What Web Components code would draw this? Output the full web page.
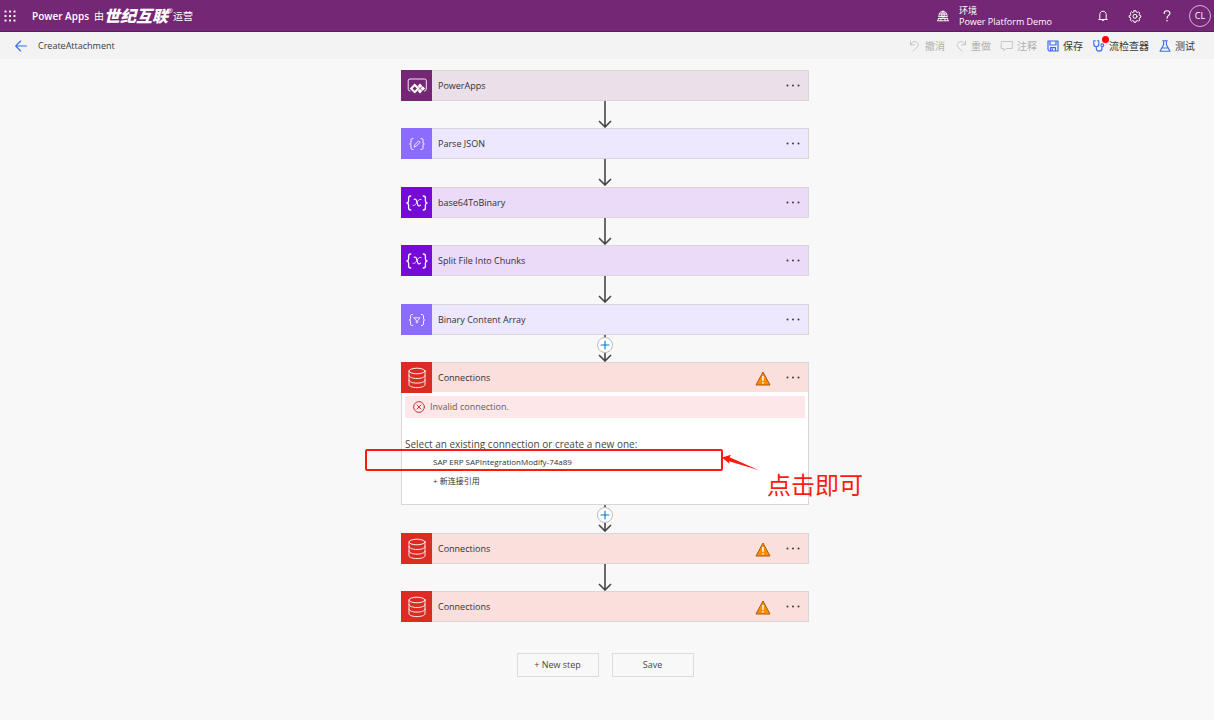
<!DOCTYPE html>
<html lang="zh-CN">
<head>
<meta charset="utf-8">
<meta name="viewport" content="width=device-width, initial-scale=1">
<title>CreateAttachment - Power Apps</title>
<style>
  body {
    margin: 0;
    min-height: 100vh;
    background: #f8f8f8;
    color: #3b3a39;
    font: 9px/12px "Open Sans", "Noto Sans CJK SC", sans-serif;
  }
</style>
</head>
<body>
<flow-page></flow-page>

<script>
const define = (name, markup, setup) => {
  const template = document.createElement('template');
  template.innerHTML = `<style>
    * { box-sizing: border-box; }
    button { font: inherit; color: inherit; background: none; border: 0; padding: 0; margin: 0; cursor: pointer; }
    svg { display: block; flex: none; }
  </style>` + markup;
  customElements.define(name, class extends HTMLElement {
    connectedCallback() {
      if (this.shadowRoot) return;
      this.attachShadow({ mode: 'open' }).append(template.content.cloneNode(true));
      if (setup) setup(this, this.shadowRoot);
    }
  });
};

const line = 'fill="none" stroke="currentColor" stroke-linecap="round" stroke-linejoin="round"';
const icons = {
  waffle: ['0 0 12 12', [1.5, 6, 10.5].map(y => [1.5, 6, 10.5].map(x =>
    `<rect x="${x - 1}" y="${y - 1}" width="2" height="2" rx=".6" fill="currentColor"/>`).join('')).join('')],
  environment: ['0 0 12 12', `<g ${line} stroke-width=".9"><path d="M2 7V5.400C2 3 3.800 1.200 6 1.200s4 1.800 4 4.200V7M2.300 4h7.400M2 6.500h8M6 1.200V8M4.300 7V4.500c0-1.400.7-2.600 1.700-3.300 1 .7 1.700 1.900 1.700 3.300V7M1.500 8.500h9M.8 10.800h10.400M1.500 8.500l-.7 2.300M10.500 8.500l.7 2.300M4 8.500v2.200M8 8.500v2.200"/></g>`],
  bell: ['0 0 12 12', `<path ${line} d="M1.800 9.500h8.400M2.800 9.500V4.600C2.800 2.700 4.200 1.200 6 1.200s3.200 1.500 3.200 3.400v4.900M5 9.800c0 1.500 2 1.500 2 0"/>`],
  gear: ['0 0 12 12', `<g ${line}><path d="M5.100.7h1.800l.3 1.300 1.200.5 1.100-.7 1.300 1.300-.7 1.100.5 1.200 1.200.3v1.600l-1.200.3-.5 1.200.7 1.100-1.300 1.300-1.100-.7-1.200.5-.3 1.300H5.100L4.800 11 3.600 10.500l-1.100.7-1.300-1.300.7-1.100-.5-1.200-1.200-.3V5.700l1.200-.3.5-1.200-.7-1.100 1.300-1.300 1.100.7L4.800 2z"/><circle cx="6" cy="6.300" r="2"/></g>`],
  help: ['0 0 12 12', `<path ${line} stroke-width="1.100" d="M3.200 3.500C3.200 1.700 4.300.8 6 .8s2.900 1 2.900 2.500C8.900 5.400 6 5.500 6 8.300"/><circle cx="6" cy="10.800" r=".8" fill="currentColor"/>`],
  back: ['0 0 12 12', `<path ${line} stroke-width="1.100" d="M11.500 6H.7M5.700 1L.7 6l5 5"/>`],
  undo: ['0 0 12 12', `<path ${line} d="M1.500 1v3.800h4M1.800 4.500C3 2.300 4.600 1.300 6.400 1.600c3 .5 3.700 3.400 1.600 5.600L4 11.200"/>`],
  redo: ['0 0 12 12', `<path ${line} d="M10.500 1v3.800h-4M10.200 4.500C9 2.300 7.400 1.300 5.600 1.600c-3 .5-4.400 3-2.500 5.600L7 11.200"/>`],
  comment: ['0 0 12 12', `<path ${line} d="M.6 1.500h10.800v7H5L2.800 10.800V8.500H.6z"/>`],
  save: ['0 0 12 12', `<path ${line} stroke-width="1.200" d="M1 1h10v10H2.300L1 9.700zM3 1v4h6V1M3.500 11V7.700h5V11M5.300 9v2"/>`],
  checker: ['0 0 12 12', `<g ${line} stroke-width="1.100"><path d="M2.300.8H.8V4c0 1.700 1 2.700 2.500 2.700S5.800 5.700 5.800 4V.8H4.400M3.300 6.700v1.500c0 1.800 1 2.900 2.800 2.900s2.900-1.100 2.900-2.700V6.700"/><circle cx="9.300" cy="5.300" r="1.400"/></g>`],
  test: ['0 0 12 12', `<path ${line} stroke-width="1.100" d="M3.700.7h4.600M4.600.7v4L1 11.200h10L7.400 4.700v-4M2.800 8h6.400"/>`],
  more: ['0 0 14 4', `<g fill="currentColor"><circle cx="1.500" cy="1.500" r="1"/><circle cx="7" cy="1.500" r="1"/><circle cx="12.500" cy="1.500" r="1"/></g>`],
  plus: ['0 0 12 12', `<path ${line} stroke-width="1.100" d="M6 2v8M2 6h8"/>`],
  error: ['0 0 12 12', `<g ${line} stroke-width=".9"><circle cx="6" cy="6" r="5.400"/><path d="M4 4l4 4M8 4L4 8"/></g>`],
  warning: ['0 0 16 16', `<path d="M8 2L15 15H1z" fill="#ff8c00" stroke="#a85a08" stroke-linejoin="round"/><path d="M7.100 6h1.800l-.3 5H7.400z" fill="#fff"/><circle cx="8" cy="12.800" r=".9" fill="#fff"/>`],
  powerapps: ['0 0 30 30', `<path ${line} stroke-width=".9" d="M8 20q-1.800 0-1.800-1.800V9.800Q6.200 8 8 8h14.500q1.800 0 1.800 1.800v8.400q0 1.800-1.800 1.800"/><path fill="#fff" fill-rule="evenodd" d="M12.700 12.500l5 5-5 5-5-5zM12.700 15.400l-2.200 2.100 2.200 2.200 2.200-2.200zM18 12.600l2.400 2.300-2.400 2.300-2.300-2.300zM18 17.800l2.400 2.300-2.400 2.300-2.300-2.300zM20.800 15.200l2.400 2.300-2.400 2.300-2.300-2.300z"/>`],
  parse: ['0 0 30 30', `<g ${line}><path d="M11 9.500c-1.800 0-2 .6-2 1.800v2.100c0 1-.3 1.600-1.400 1.600 1.100 0 1.400.6 1.400 1.600v2.100c0 1.200.2 1.800 2 1.800M19 9.500c1.800 0 2 .6 2 1.800v2.100c0 1 .3 1.600 1.400 1.600-1.100 0-1.400.6-1.400 1.600v2.100c0 1.200-.2 1.800-2 1.800"/><path stroke-width=".8" d="M12.300 17.700l.5-2 3.900-3.800 1.400 1.400-3.900 3.800z"/></g>`],
  variable: ['0 0 30 30', `<g ${line} stroke-width="1.300"><path d="M8.700 8c-1.800 0-2.100.8-2.100 2v2.800c0 1.300-.4 2-1.700 2.200 1.300.2 1.700.9 1.700 2.200V20c0 1.200.3 2 2.100 2M21.300 8c1.800 0 2.100.8 2.100 2v2.800c0 1.300.4 2 1.700 2.200-1.300.2-1.700.9-1.700 2.200V20c0 1.200-.3 2-2.100 2"/><path stroke-width="1.200" d="M12.200 11.300c1.400-.5 2 .2 2.400 1.600l1 3.500c.4 1.600 1.400 2.200 2.800.8"/><path stroke-width=".8" d="M19 11.400c-2-.7-3 1.400-4.200 3.200-1.100 1.700-2 3.700-3.800 2.700"/></g>`],
  filter: ['0 0 30 30', `<g ${line}><path d="M10.500 9.500c-1.800 0-2 .6-2 1.800v2.100c0 1-.3 1.600-1.400 1.600 1.100 0 1.400.6 1.400 1.600v2.100c0 1.200.2 1.800 2 1.800M19.500 9.500c1.800 0 2 .6 2 1.800v2.100c0 1 .3 1.600 1.400 1.600-1.100 0-1.400.6-1.400 1.600v2.100c0 1.200-.2 1.800-2 1.800"/><path stroke-width=".8" d="M12 12.800h6l-2.300 2.700v2.200h-1.400v-2.200z"/></g>`],
  database: ['0 0 30 30', `<g ${line} stroke-width=".9"><ellipse cx="15" cy="8" rx="8" ry="2.800"/><path d="M7 8v13.700c0 1.600 3.500 2.900 8 2.900s8-1.300 8-2.900V8M7 12.600c0 1.600 3.500 2.900 8 2.900s8-1.300 8-2.900M7 17.200c0 1.600 3.500 2.900 8 2.900s8-1.300 8-2.900"/></g>`]
};

define('ui-icon', `<style>
  :host { display: block; flex: none; width: 12px; height: 12px; }
  svg { width: 100%; height: 100%; overflow: visible; }
</style><svg aria-hidden="true"></svg>`, (host, root) => {
  const [box, shape] = icons[host.getAttribute('name')];
  const svg = root.querySelector('svg');
  svg.setAttribute('viewBox', box);
  svg.innerHTML = shape;
});

define('app-header', `<style>
  :host { display: block; background: #742774; border-bottom: 1px solid #5f1c5f; color: #fff; }
  header { display: flex; align-items: center; height: 31px; padding: 0 3px 0 4px; }
  button { display: grid; place-items: center; width: 32px; height: 31px; }
  .waffle { width: 12px; margin-right: 16px; }
  .brand { display: flex; align-items: center; flex: 1; color: inherit; text-decoration: none; white-space: nowrap; line-height: 16px; }
  strong { font-size: 10px; font-weight: 600; margin-right: 5px; }
  em { font-size: 16px; font-weight: 900; }
  sup { font-size: 6px; line-height: 6px; align-self: flex-start; }
  .cn { font-size: 10px; }
  .environment { display: flex; align-items: center; gap: 10px; width: 150px; line-height: 11px; white-space: nowrap; }
  .avatar { width: 22px; height: 22px; margin-left: 6px; border: 1px solid #d3b5d3; border-radius: 50%; }
</style>
<header>
  <button class="waffle" aria-label="应用启动器"><ui-icon name="waffle"></ui-icon></button>
  <a class="brand" href="#"><strong>Power Apps</strong><span class="cn">由</span><em>世纪互联</em><sup>®</sup><span class="cn">运营</span></a>
  <div class="environment"><ui-icon name="environment"></ui-icon><div><div>环境</div><div>Power Platform Demo</div></div></div>
  <button aria-label="通知"><ui-icon name="bell"></ui-icon></button>
  <button aria-label="设置"><ui-icon name="gear"></ui-icon></button>
  <button aria-label="帮助"><ui-icon name="help"></ui-icon></button>
  <button class="avatar" aria-label="帐户">CL</button>
</header>`);

define('command-button', `<style>
  :host { display: block; }
  button { position: relative; display: flex; align-items: center; gap: 4px; height: 26px; font-size: 10px; white-space: nowrap; }
  ui-icon { color: #3b6cf0; }
  button:disabled { color: #b3b1af; cursor: default; }
  button:disabled ui-icon { color: #c8c6c4; }
  .badge { position: absolute; left: 9px; top: 3px; width: 7px; height: 7px; border-radius: 50%; background: #f00; }
</style><button><slot></slot></button>`, (host, root) => {
  const button = root.querySelector('button');
  button.disabled = host.hasAttribute('disabled');
  const icon = document.createElement('ui-icon');
  icon.setAttribute('name', host.getAttribute('icon'));
  button.prepend(icon);
  if (host.hasAttribute('alert')) {
    const badge = document.createElement('span');
    badge.className = 'badge';
    button.append(badge);
  }
});

define('command-bar', `<style>
  :host { display: flex; align-items: center; gap: 10px; height: 27px; padding: 0 19px 0 15px; background: #f3f3f3; }
  a { display: block; color: #3b6cf0; }
  h1 { flex: 1; margin: 0 0 0 1px; font-size: 9px; font-weight: 400; white-space: nowrap; }
</style>
<a href="#" aria-label="返回"><ui-icon name="back"></ui-icon></a>
<h1><slot name="title"></slot></h1>
<slot></slot>`);

define('flow-card', `<style>
  :host { display: block; position: relative; border: 1px solid #d8d6d8; background: #fff; }
  .head { display: flex; align-items: center; height: 29px; background: var(--tint); }
  .tile { width: 31px; height: 31px; margin: -1px 0 -1px -1px; background: var(--accent); display: grid; place-items: center; color: #fff; }
  .tile ui-icon { width: 30px; height: 30px; }
  h2 { flex: 1; margin: 0 0 0 6px; font-size: 9px; font-weight: 400; color: #323130; }
  .warn { width: 16px; height: 16px; margin-right: 8px; }
  button { display: grid; place-items: center; width: 28px; height: 29px; margin-right: 1px; }
  button ui-icon { width: 14px; height: 4px; }
</style>
<div class="head">
  <div class="tile"></div>
  <h2></h2>
  <button aria-label="更多"><ui-icon name="more"></ui-icon></button>
</div>
<slot></slot>`, (host, root) => {
  const icon = document.createElement('ui-icon');
  icon.setAttribute('name', host.getAttribute('icon'));
  root.querySelector('.tile').append(icon);
  root.querySelector('h2').textContent = host.getAttribute('label');
  if (host.hasAttribute('warning')) {
    const warn = document.createElement('ui-icon');
    warn.setAttribute('name', 'warning');
    warn.className = 'warn';
    root.querySelector('h2').after(warn);
  }
});

define('flow-arrow', `<style>
  :host { display: grid; justify-content: center; height: 27px; color: #484644; }
  svg, button { grid-area: 1 / 1; }
  svg { width: 16px; height: 27px; }
  button { display: none; justify-self: center; width: 16px; height: 16px; margin-top: 2px; place-items: center; border: 1px solid #bebbb8; border-radius: 50%; background: #fff; color: #0078d4; }
  :host([insert]) button { display: grid; }
</style>
<svg viewBox="0 0 16 27" aria-hidden="true"><path d="M8 0v26M2 20l6 6 6-6" fill="none" stroke="currentColor" stroke-width="1.600"/></svg>
<button aria-label="插入新步骤"><ui-icon name="plus"></ui-icon></button>`);

define('connection-picker', `<style>
  :host { display: block; padding: 4px 3px 16px; }
  .error { display: flex; align-items: center; gap: 5px; height: 22px; padding: 0 8px; background: #fde7e9; color: #605e5c; }
  .error ui-icon { color: #c4262e; }
  p { margin: 19px 0 4px; font-size: 10px; line-height: 14px; color: #484644; }
  ul { list-style: none; margin: 0; padding: 0 0 0 28px; display: grid; gap: 5px; font-size: 8px; }
  li { height: 14px; }
  ul button { display: block; width: 100%; line-height: 14px; text-align: left; color: #323130; }
</style>
<div class="error" role="alert"><ui-icon name="error"></ui-icon>Invalid connection.</div>
<p>Select an existing connection or create a new one:</p>
<ul>
  <li><button>SAP ERP SAPIntegrationModify-74a89</button></li>
  <li><button>+ 新连接引用</button></li>
</ul>`);

/* Red call-out laid over the card: frame, pointer and caption. */
define('call-out', `<style>
  :host { position: absolute; left: -37px; top: 86px; width: 500px; height: 52px; color: #ff1a0d; pointer-events: none; }
  .frame { position: absolute; left: 0; top: 0; width: 358px; height: 22px; border: 2px solid currentColor; border-radius: 2px; }
  svg { position: absolute; left: 356px; top: 5px; width: 39px; height: 17px; }
  span { position: absolute; left: 402px; top: 20px; font-size: 24px; line-height: 32px; white-space: nowrap; }
</style>
<div class="frame"></div>
<svg viewBox="0 0 39 17" aria-hidden="true"><path d="M1 3.500L10 .8 8.600 3.300 38 16.300 8 7.200 8.500 9.800z" fill="currentColor"/></svg>
<span><slot></slot></span>`);

define('flow-page', `<style>
  :host { display: block; }
  main { display: flex; flex-direction: column; align-items: center; padding: 11px 4px 24px 0; }
  .flow { width: 100%; max-width: 408px; }
  flow-arrow:nth-of-type(even) { height: 28px; }
  .trigger { --accent: #742774; --tint: #ebdfea; }
  .data { --accent: #8c6cff; --tint: #eee8ff; }
  .variable { --accent: #770bd6; --tint: #ebdaf8; }
  .connection { --accent: #da2c22; --tint: #fbdfdc; }
  .actions { display: flex; gap: 13px; margin-top: 31px; }
  .actions button { width: 82px; height: 24px; border: 1px solid #dddcda; color: #484644; }
</style>
<app-header></app-header>
<command-bar>
  <span slot="title">CreateAttachment</span>
  <command-button icon="undo" disabled>撤消</command-button>
  <command-button icon="redo" disabled>重做</command-button>
  <command-button icon="comment" disabled>注释</command-button>
  <command-button icon="save">保存</command-button>
  <command-button icon="checker" alert>流检查器</command-button>
  <command-button icon="test">测试</command-button>
</command-bar>
<main>
  <div class="flow">
    <flow-card class="trigger" icon="powerapps" label="PowerApps"></flow-card>
    <flow-arrow></flow-arrow>
    <flow-card class="data" icon="parse" label="Parse JSON"></flow-card>
    <flow-arrow></flow-arrow>
    <flow-card class="variable" icon="variable" label="base64ToBinary"></flow-card>
    <flow-arrow></flow-arrow>
    <flow-card class="variable" icon="variable" label="Split File Into Chunks"></flow-card>
    <flow-arrow></flow-arrow>
    <flow-card class="data" icon="filter" label="Binary Content Array"></flow-card>
    <flow-arrow insert></flow-arrow>
    <flow-card class="connection" icon="database" label="Connections" warning>
      <connection-picker></connection-picker>
      <call-out>点击即可</call-out>
    </flow-card>
    <flow-arrow insert></flow-arrow>
    <flow-card class="connection" icon="database" label="Connections" warning></flow-card>
    <flow-arrow></flow-arrow>
    <flow-card class="connection" icon="database" label="Connections" warning></flow-card>
  </div>
  <div class="actions">
    <button>+ New step</button>
    <button>Save</button>
  </div>
</main>`);
</script>
</body>
</html>
